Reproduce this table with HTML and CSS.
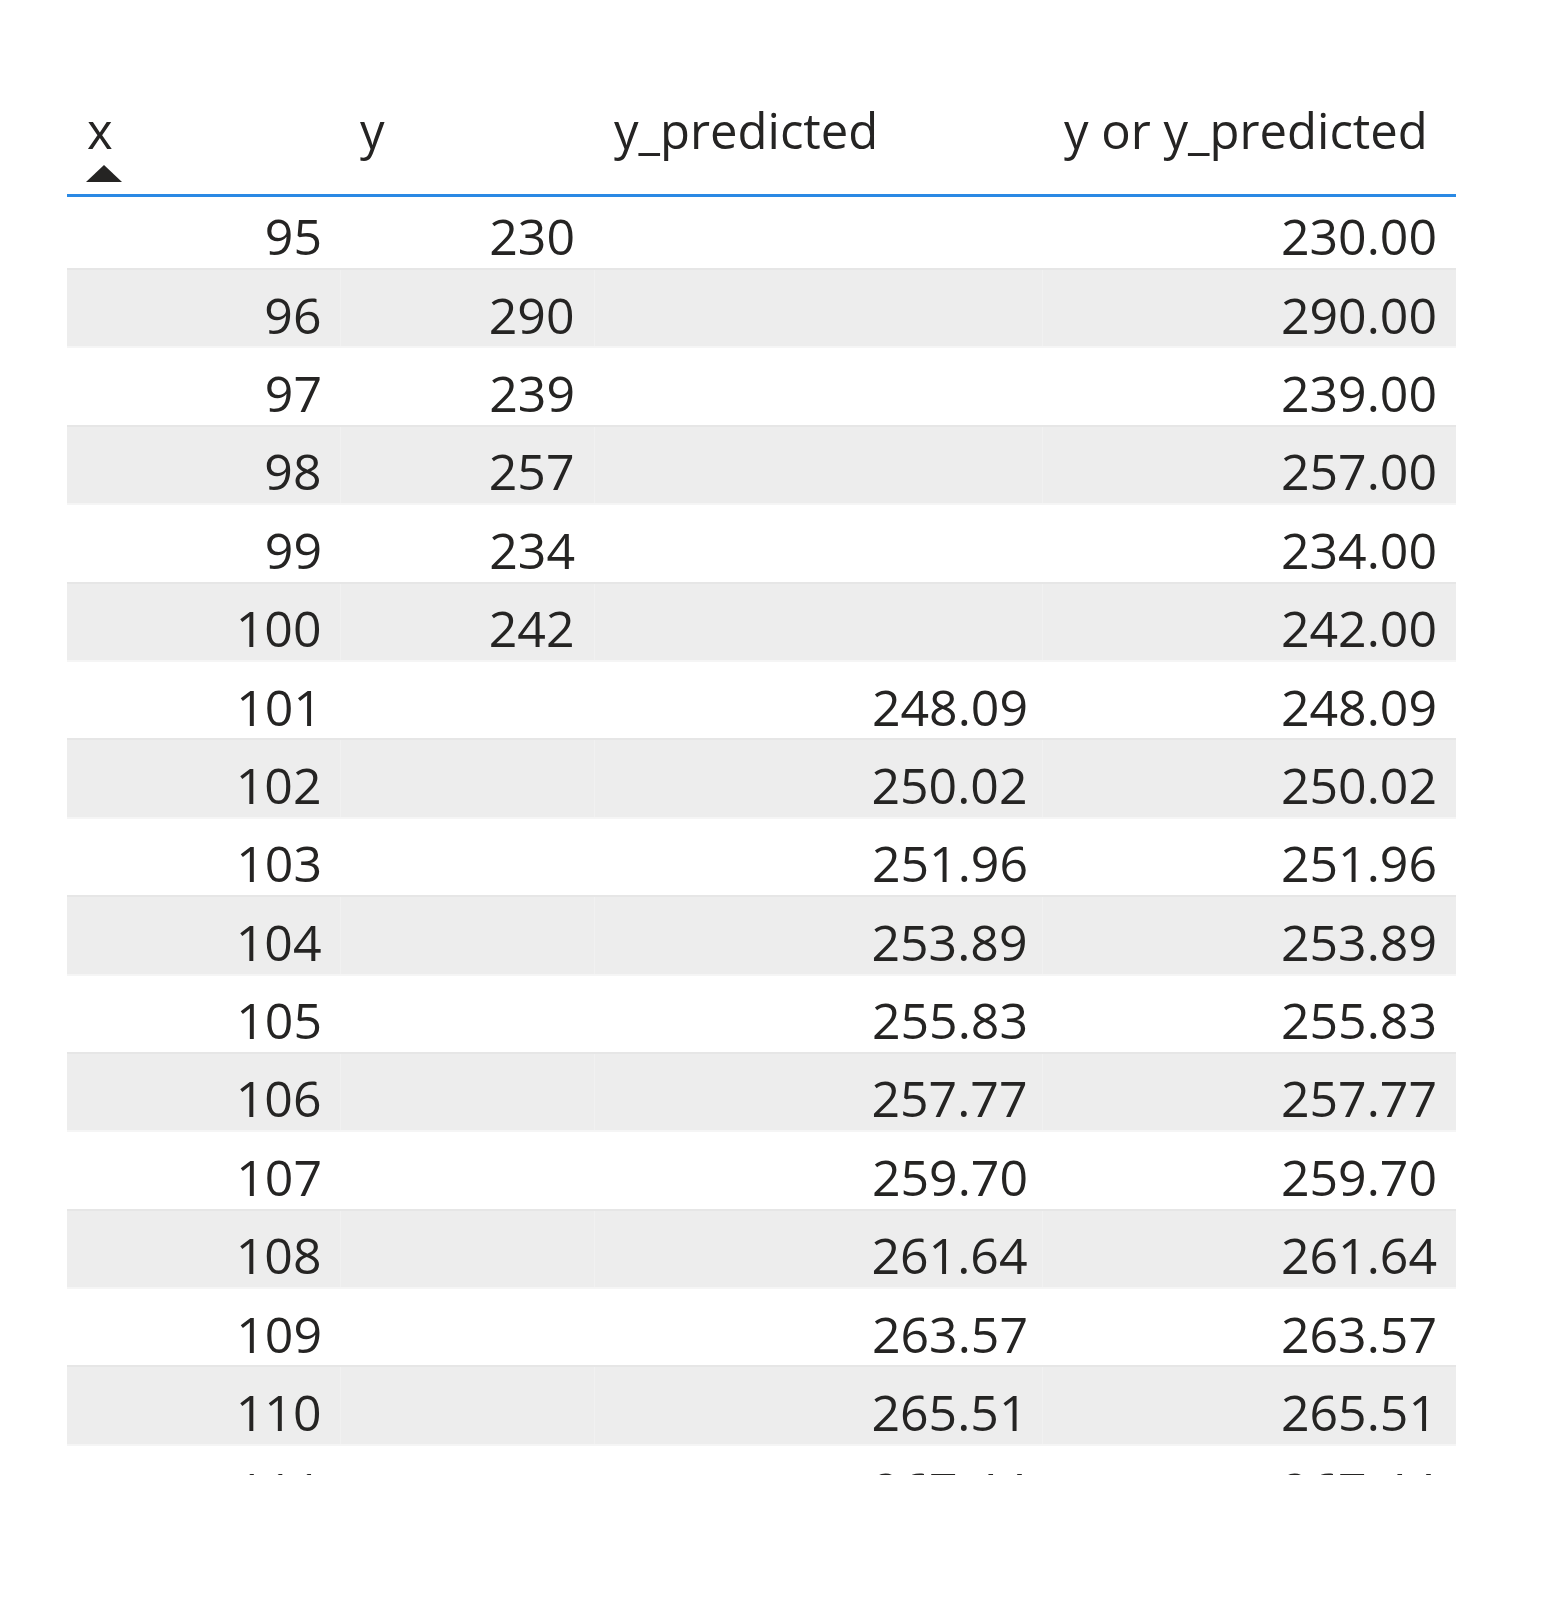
FILE: index.html
```html
<!DOCTYPE html>
<html lang="en">
<head>
<meta charset="utf-8">
<title>Table</title>
<link rel="stylesheet" href="styles.css">
</head>
<body>
<div class="viewport">
  <table class="grid">
    <colgroup>
      <col class="c1"><col class="c2"><col class="c3"><col class="c4">
    </colgroup>
    <thead>
      <tr>
        <th><div class="hd">x</div><div class="sort"></div></th>
        <th><div class="hd">y</div></th>
        <th><div class="hd">y_predicted</div></th>
        <th><div class="hd">y or y_predicted</div></th>
      </tr>
    </thead>
    <tbody>
      <tr><td class="a">95</td><td class="b">230</td><td class="p"></td><td class="q">230.00</td></tr>
      <tr><td class="a">96</td><td class="b">290</td><td class="p"></td><td class="q">290.00</td></tr>
      <tr><td class="a">97</td><td class="b">239</td><td class="p"></td><td class="q">239.00</td></tr>
      <tr><td class="a">98</td><td class="b">257</td><td class="p"></td><td class="q">257.00</td></tr>
      <tr><td class="a">99</td><td class="b">234</td><td class="p"></td><td class="q">234.00</td></tr>
      <tr><td class="a">100</td><td class="b">242</td><td class="p"></td><td class="q">242.00</td></tr>
      <tr><td class="a">101</td><td class="b"></td><td class="p">248.09</td><td class="q">248.09</td></tr>
      <tr><td class="a">102</td><td class="b"></td><td class="p">250.02</td><td class="q">250.02</td></tr>
      <tr><td class="a">103</td><td class="b"></td><td class="p">251.96</td><td class="q">251.96</td></tr>
      <tr><td class="a">104</td><td class="b"></td><td class="p">253.89</td><td class="q">253.89</td></tr>
      <tr><td class="a">105</td><td class="b"></td><td class="p">255.83</td><td class="q">255.83</td></tr>
      <tr><td class="a">106</td><td class="b"></td><td class="p">257.77</td><td class="q">257.77</td></tr>
      <tr><td class="a">107</td><td class="b"></td><td class="p">259.70</td><td class="q">259.70</td></tr>
      <tr><td class="a">108</td><td class="b"></td><td class="p">261.64</td><td class="q">261.64</td></tr>
      <tr><td class="a">109</td><td class="b"></td><td class="p">263.57</td><td class="q">263.57</td></tr>
      <tr><td class="a">110</td><td class="b"></td><td class="p">265.51</td><td class="q">265.51</td></tr>
      <tr><td class="a">111</td><td class="b"></td><td class="p">267.44</td><td class="q">267.44</td></tr>
    </tbody>
  </table>
</div>
</body>
</html>
```
FILE: styles.css
```css
html, body {
  margin: 0;
  padding: 0;
  background: #ffffff;
}

body {
  font-family: "Open Sans", "Noto Sans", sans-serif;
  color: #252423;
}

.viewport {
  margin: 96px 0 0 67px;
  width: 1389px;
  height: 1379px;
  overflow: hidden;
}

.grid {
  width: 1389px;
  table-layout: fixed;
  border-collapse: collapse;
  border-spacing: 0;
}

.c1 { width: 273px; }
.c2 { width: 254px; }
.c3 { width: 448px; }
.c4 { width: 414px; }

.grid th {
  height: 98px;
  padding: 0 0 0 20px;
  text-align: left;
  vertical-align: top;
  font-weight: 400;
  font-size: 49px;
  line-height: 68px;
  border-bottom: 3px solid #2a89e4;
  box-sizing: content-box;
}

.grid th:last-child {
  padding-left: 22px;
}

.hd {
  white-space: nowrap;
}

.sort {
  width: 0;
  height: 0;
  margin: 1px 0 0 -1px;
  border-left: 18px solid transparent;
  border-right: 18px solid transparent;
  border-bottom: 17px solid #252423;
}

.grid td {
  font-size: 50px;
  line-height: 60px;
  height: 60px;
  padding: 14.6px 19px 1.8px 0;
  text-align: right;
  white-space: nowrap;
  border-bottom: 2px solid #e6e6e6;
}

.grid td.a { padding-right: 18px; }
.grid td.b { padding-right: 19px; }
.grid td.p { padding-right: 14px; }
.grid td.q { padding-right: 19px; }

.grid tbody tr:nth-child(even) td {
  background: #ededed;
  border-bottom-color: #f5f5f5;
}

.grid tbody tr:nth-child(even) td + td {
  border-left: 1px solid #f1f1f1;
}

.grid tbody tr:first-child td {
  padding-top: 8.6px;
  padding-bottom: 2.4px;
}
```
